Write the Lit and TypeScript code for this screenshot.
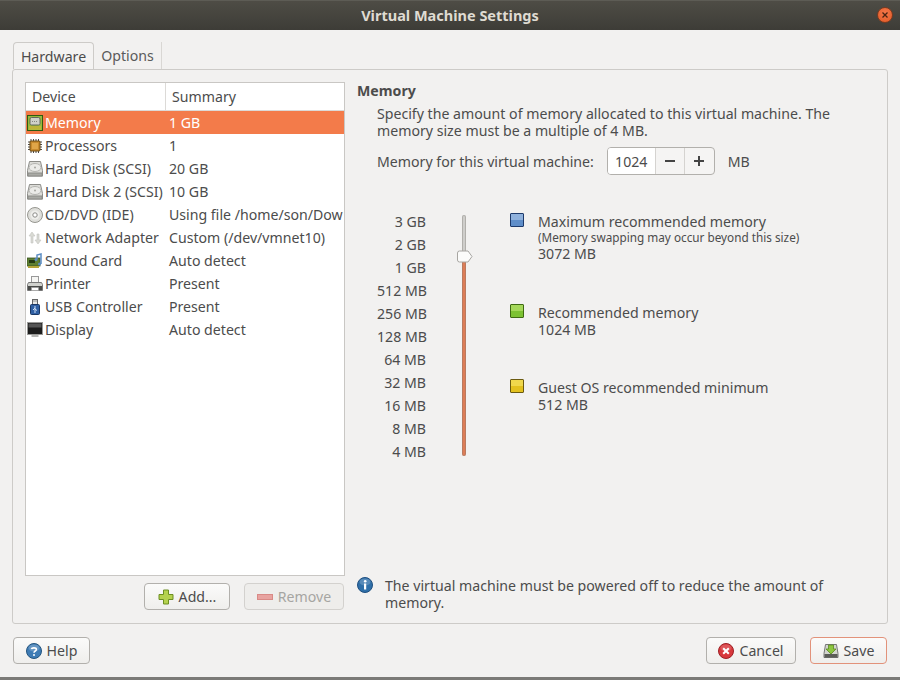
import { LitElement, css, html, svg } from 'lit';
import { customElement } from 'lit/decorators.js';

const icons: Record<string, unknown> = {
  memory: svg`<rect x=".5" y=".5" width="15" height="15" fill="#93ba3c" stroke="#2f5a10"/><rect x="2" y="11" width="12" height="3.500" fill="#efdf4e"/><path d="M3 11v3.500M5 11v3.500M7 11v3.500M9 11v3.500M11 11v3.500M13 11v3.500" stroke="#8a8a24"/><rect x="3" y="2.500" width="10" height="7.500" rx="1.500" fill="#cfd1c9" stroke="#63665c"/><path d="M5 6.500h6" stroke="#85877f" stroke-dasharray="1 1"/>`,
  cpu: svg`<path d="M1 4h14M1 6.500h14M1 9h14M1 11.500h14M4 1v14M6.500 1v14M9 1v14M11.500 1v14" stroke="#4a4a4a"/><rect x="3" y="3" width="10" height="10" rx="1" fill="#c98a2c" stroke="#6d4a12"/><rect x="5" y="5" width="6" height="6" fill="#dfa548"/>`,
  disk: svg`<path d="M2.500 .5h11l2 9v5.500H.5V9.500z" fill="#dcdcd8" stroke="#8c8c88"/><ellipse cx="8" cy="6.500" rx="6" ry="4" fill="#ebebe8" stroke="#b5b5b1"/><circle cx="8" cy="6.500" r="1" fill="#a5a5a1"/><rect x="1" y="12" width="14" height="3" fill="#a9aaa5" stroke="#8c8c88"/>`,
  cd: svg`<circle cx="8" cy="8" r="7.500" fill="#dededa" stroke="#96968f"/><circle cx="8" cy="8" r="4.500" fill="#eeeeeb"/><circle cx="8" cy="8" r="2.200" fill="#fff" stroke="#8b8b87"/>`,
  net: svg`<path d="M5 2l3 4H6v7H4V6H2zM11 14l-3-4h2V4h2v6h2z" fill="#d9dad4" stroke="#c4c5bf" stroke-width=".6"/>`,
  sound: svg`<rect x="0" y="5" width="13" height="8" fill="#5d7f32" stroke="#3a5220" stroke-width=".8"/><rect x="2" y="7" width="6" height="3" fill="#243a14"/><rect x="1" y="13" width="11" height="2" fill="#b4a53a"/><path d="M10 6V2l4-1v10" fill="none" stroke="#5a8cc4" stroke-width="1.500"/><circle cx="12.500" cy="11" r="1.500" fill="#5a8cc4"/><circle cx="9" cy="6.500" r="1.500" fill="#5a8cc4"/>`,
  printer: svg`<rect x="4.500" y=".5" width="7" height="6" fill="#f6f6f4" stroke="#999"/><path d="M1.500 6.500h13l1 2v6H.5v-6z" fill="#d0d1cd" stroke="#777"/><rect x="1" y="10" width="14" height="4" fill="#4a4b49"/><rect x="4.500" y="11.500" width="7" height="3" fill="#fff" stroke="#999" stroke-width=".5"/>`,
  usb: svg`<rect x="5.500" y=".5" width="5" height="5" fill="#e8e8e6" stroke="#666"/><path d="M6.500 2h1M8.500 2h1" stroke="#444"/><rect x="3.500" y="5.500" width="9" height="10" rx="1" fill="#2f5fa3" stroke="#1b3763"/><path d="M8 7v7M8 9l-2 2M8 10l2 1.500" stroke="#cfe0f5" fill="none"/>`,
  display: svg`<rect x=".5" y=".5" width="15" height="12" fill="#1c1c1c" stroke="#9a9a98"/><rect x="1.500" y="1.500" width="13" height="4" fill="#555"/><rect x="4.500" y="13" width="7" height="2" fill="#b5b5b3"/>`,
};

const devices = [
  ['memory', 'Memory', '1 GB'],
  ['cpu', 'Processors', '1'],
  ['disk', 'Hard Disk (SCSI)', '20 GB'],
  ['disk', 'Hard Disk 2 (SCSI)', '10 GB'],
  ['cd', 'CD/DVD (IDE)', 'Using file /home/son/Dow'],
  ['net', 'Network Adapter', 'Custom (/dev/vmnet10)'],
  ['sound', 'Sound Card', 'Auto detect'],
  ['printer', 'Printer', 'Present'],
  ['usb', 'USB Controller', 'Present'],
  ['display', 'Display', 'Auto detect'],
];

const scale = ['3 GB', '2 GB', '1 GB', '512 MB', '256 MB', '128 MB', '64 MB', '32 MB', '16 MB', '8 MB', '4 MB'];

@customElement('app-root')
export class AppRoot extends LitElement {
  static styles = css`
    :host {
      display: flex;
      flex-direction: column;
      width: 900px;
      height: 680px;
      overflow: hidden;
      background: #f2f1f0;
      color: #4c4c4c;
      font-family: 'Noto Sans', 'Open Sans', sans-serif;
      font-size: 14.15px;
      line-height: 17px;
      box-sizing: border-box;
      border-bottom: 3px solid #7b7a77;
    }
    * { box-sizing: border-box; }

    .titlebar {
      flex: none;
      height: 30px;
      position: relative;
      display: flex;
      align-items: center;
      justify-content: center;
      background: linear-gradient(#4e4c45, #44433d 60%, #3d3c37);
      border-top: 1px solid #5d5c55;
      color: #dfdbd2;
      font-weight: 700;
      font-size: 14.5px;
    }
    .close {
      position: absolute;
      right: 7px;
      top: 6px;
      width: 16px;
      height: 16px;
      border-radius: 50%;
      background: radial-gradient(circle at 50% 35%, #f4774a, #e25a25);
      border: 1px solid #7a3a20;
    }
    .close svg { display: block; }

    .tabs {
      flex: none;
      display: flex;
      margin: 12px 0 0 13px;
      height: 27px;
    }
    .tab {
      display: flex;
      align-items: center;
      justify-content: center;
      height: 27px;
      color: #5a5a5a;
    }
    .tab.on {
      width: 81px;
      color: #4c4c4c;
      background: #f4f3f2;
      border: 1px solid #cdcbc8;
      border-bottom: none;
      border-radius: 4px 4px 0 0;
    }
    .tab.off {
      width: 68px;
      border-right: 1px solid #d9d7d4;
    }

    .frame {
      flex: none;
      margin: 0 12px;
      height: 555px;
      border: 1px solid #cdcbc8;
      border-radius: 3px;
      padding: 12px 12px 12px;
      display: flex;
      gap: 12px;
    }

    .left {
      flex: none;
      width: 320px;
      display: flex;
      flex-direction: column;
    }
    .list {
      flex: none;
      height: 494px;
      background: #fff;
      border: 1px solid #c9c7c4;
    }
    .list-head {
      display: flex;
      height: 28px;
      border-bottom: 1px solid #dcdad7;
      color: #4c4c4c;
    }
    .list-head div {
      display: flex;
      align-items: center;
      padding-left: 6px;
    }
    .list-head div:first-child {
      width: 140px;
      border-right: 1px solid #dcdad7;
    }
    .row {
      display: flex;
      align-items: center;
      height: 23px;
    }
    .row.sel {
      background: #f37b4a;
      color: #fff;
    }
    .row svg {
      flex: none;
      width: 16px;
      height: 16px;
      margin: 0 2px 0 1px;
    }
    .row .name {
      width: 124px;
      white-space: nowrap;
    }
    .list-buttons {
      flex: none;
      margin: 7px 1px 0 0;
      display: flex;
      justify-content: flex-end;
      gap: 14px;
    }

    .btn {
      height: 27px;
      display: flex;
      align-items: center;
      justify-content: center;
      gap: 5px;
      border: 1px solid #b2b0ac;
      border-radius: 4px;
      background: linear-gradient(#fbfbfa, #efeeec);
      color: #4c4c4c;
    }
    .btn svg { flex: none; }
    .btn.add { width: 86px; }
    .btn.remove {
      width: 100px;
      color: #a6a5a2;
      background: #eeedeb;
      border-color: #d3d1ce;
    }

    .right {
      flex: 1;
      min-width: 0;
      display: flex;
      flex-direction: column;
    }
    .heading {
      font-weight: 700;
      margin-bottom: 6px;
    }
    .body {
      padding-left: 20px;
    }
    .memory-row {
      display: flex;
      align-items: center;
      margin-top: 8px;
      height: 28px;
    }
    .spin {
      margin-left: 13px;
      display: flex;
      width: 108px;
      height: 28px;
      background: #f5f4f3;
      border: 1px solid #b2b0ac;
      border-radius: 4px;
      overflow: hidden;
    }
    .spin .val {
      width: 47px;
      background: #fff;
      display: flex;
      align-items: center;
      justify-content: center;
    }
    .spin .step {
      width: 29px;
      border-left: 1px solid #d5d3d0;
      display: flex;
      align-items: center;
      justify-content: center;
    }
    .unit { margin-left: 13px; }

    .memory-map {
      display: flex;
      margin-top: 38px;
    }
    .scale {
      flex: none;
      width: 49px;
      margin-left: 20px;
      text-align: right;
      display: flex;
      flex-direction: column;
      gap: 6px;
      white-space: nowrap;
    }
    .scale div { height: 17px; }
    .track {
      position: relative;
      flex: none;
      width: 4px;
      height: 241px;
      margin: 2px 0 0 36px;
      border-radius: 2px;
      background: linear-gradient(#cfcecb 0 42px, #dd7d57 42px);
      box-shadow: inset 0 0 0 1px rgba(120, 118, 112, 0.35);
    }
    .thumb {
      position: absolute;
      left: -6px;
      top: 35px;
      display: block;
    }
    .legend {
      margin-left: 44px;
      display: flex;
      flex-direction: column;
    }
    .legend-item {
      display: flex;
      gap: 14px;
    }
    .legend-item + .legend-item { margin-top: 41px; }
    .legend-item.first { padding-bottom: 1px; }
    .swatch {
      flex: none;
      width: 14px;
      height: 14px;
      border: 1px solid;
      border-radius: 1px;
    }
    .small {
      display: block;
      font-size: 11.75px;
      line-height: 15px;
    }

    .note {
      margin-top: auto;
      display: flex;
      gap: 12px;
    }
    .note svg { flex: none; }

    .footer {
      flex: none;
      display: flex;
      margin: 13px 13px 0;
      gap: 14px;
    }
    .btn.help { width: 77px; margin-right: auto; }
    .btn.cancel { width: 90px; }
    .btn.save { width: 77px; border-color: #e2927a; }
  `;

  render() {
    return html`
      <div class="titlebar">
        Virtual Machine Settings
        <div class="close">
          <svg width="14" height="14" viewBox="0 0 14 14"><path d="M4.500 4.500l5 5M9.500 4.500l-5 5" stroke="#4a2412" stroke-width="1.300"/></svg>
        </div>
      </div>
      <div class="tabs">
        <div class="tab on">Hardware</div>
        <div class="tab off">Options</div>
      </div>
      <div class="frame">
        <div class="left">
          <div class="list">
            <div class="list-head"><div>Device</div><div>Summary</div></div>
            ${devices.map(
              ([icon, name, summary], i) => html`
                <div class="row ${i == 0 ? 'sel' : ''}">
                  <svg viewBox="0 0 16 16">${icons[icon]}</svg>
                  <span class="name">${name}</span>
                  <span>${summary}</span>
                </div>
              `
            )}
          </div>
          <div class="list-buttons">
            <div class="btn add">
              <svg width="16" height="16" viewBox="0 0 16 16"><path d="M5.500 1h5v4.500H15v5h-4.500V15h-5v-4.500H1v-5h4.500z" fill="#b5d24e" stroke="#6d8f22"/></svg>
              Add...
            </div>
            <div class="btn remove">
              <svg width="16" height="16" viewBox="0 0 16 16"><rect x=".5" y="5.500" width="15" height="5" fill="#e8a3a0" stroke="#d98a86"/></svg>
              Remove
            </div>
          </div>
        </div>
        <div class="right">
          <div class="heading">Memory</div>
          <div class="body">
            Specify the amount of memory allocated to this virtual machine. The<br />
            memory size must be a multiple of 4 MB.
            <div class="memory-row">
              Memory for this virtual machine:
              <div class="spin">
                <div class="val">1024</div>
                <div class="step"><svg width="12" height="12" viewBox="0 0 12 12"><path d="M1 6h10" stroke="#444" stroke-width="2"/></svg></div>
                <div class="step"><svg width="12" height="12" viewBox="0 0 12 12"><path d="M1 6h10M6 1v10" stroke="#444" stroke-width="2"/></svg></div>
              </div>
              <span class="unit">MB</span>
            </div>
          </div>
          <div class="memory-map">
            <div class="scale">${scale.map((s) => html`<div>${s}</div>`)}</div>
            <div class="track">
              <svg class="thumb" width="17" height="13" viewBox="0 0 17 13"><path d="M1.500 3q0-2 2-2h8.500l4 5.500-4 5.500H3.500q-2 0-2-2z" fill="#fbfbfa" stroke="#a8a6a2"/></svg>
            </div>
            <div class="legend">
              <div class="legend-item first">
                <div class="swatch" style="background:linear-gradient(#8fb1dc 50%,#5f8ec9 50%);border-color:#1d3a6b"></div>
                <div>Maximum recommended memory<span class="small">(Memory swapping may occur beyond this size)</span>3072 MB</div>
              </div>
              <div class="legend-item">
                <div class="swatch" style="background:linear-gradient(#a5d85a 50%,#7cc232 50%);border-color:#3e6a12"></div>
                <div>Recommended memory<br />1024 MB</div>
              </div>
              <div class="legend-item">
                <div class="swatch" style="background:linear-gradient(#f0d84c 50%,#e3c11e 50%);border-color:#6b5a10"></div>
                <div>Guest OS recommended minimum<br />512 MB</div>
              </div>
            </div>
          </div>
          <div class="note">
            <svg width="16" height="16" viewBox="0 0 16 16"><circle cx="8" cy="8" r="7.500" fill="#2f6fa8" stroke="#1f4f80"/><ellipse cx="8" cy="5" rx="5.500" ry="3.500" fill="#fff" opacity=".2"/><rect x="7" y="6.500" width="2.200" height="6" fill="#fff"/><circle cx="8.200" cy="4.200" r="1.300" fill="#fff"/></svg>
            <div>The virtual machine must be powered off to reduce the amount of<br />memory.</div>
          </div>
        </div>
      </div>
      <div class="footer">
        <div class="btn help">
          <svg width="16" height="16" viewBox="0 0 16 16"><circle cx="8" cy="8" r="7.500" fill="#3f7cb5" stroke="#24557f"/><ellipse cx="8" cy="5" rx="5.500" ry="3.500" fill="#fff" opacity=".2"/><path d="M5.500 6.200C5.700 4.500 10.300 4.300 10.400 6.400 10.500 8 8 8 8 9.800" fill="none" stroke="#fff" stroke-width="1.600"/><circle cx="8" cy="12" r="1" fill="#fff"/></svg>
          Help
        </div>
        <div class="btn cancel">
          <svg width="16" height="16" viewBox="0 0 16 16"><circle cx="8" cy="8" r="7.500" fill="#d8383c" stroke="#9e2025"/><ellipse cx="8" cy="5" rx="5.500" ry="3.500" fill="#fff" opacity=".15"/><path d="M5.200 5.200l5.600 5.600M10.800 5.200l-5.600 5.600" stroke="#fff" stroke-width="2"/></svg>
          Cancel
        </div>
        <div class="btn save">
          <svg width="16" height="16" viewBox="0 0 16 16"><path d="M2.500 1.500h11l1.500 9v4H1v-4z" fill="#d3d4ce" stroke="#777"/><rect x="1.500" y="11" width="13" height="3.500" fill="#5c5d58"/><path d="M5.500 2h5v4H13l-5 5-5-5h2.500z" fill="#8cc63f" stroke="#5c8a1e" stroke-width=".8"/></svg>
          Save
        </div>
      </div>
    `;
  }
}
